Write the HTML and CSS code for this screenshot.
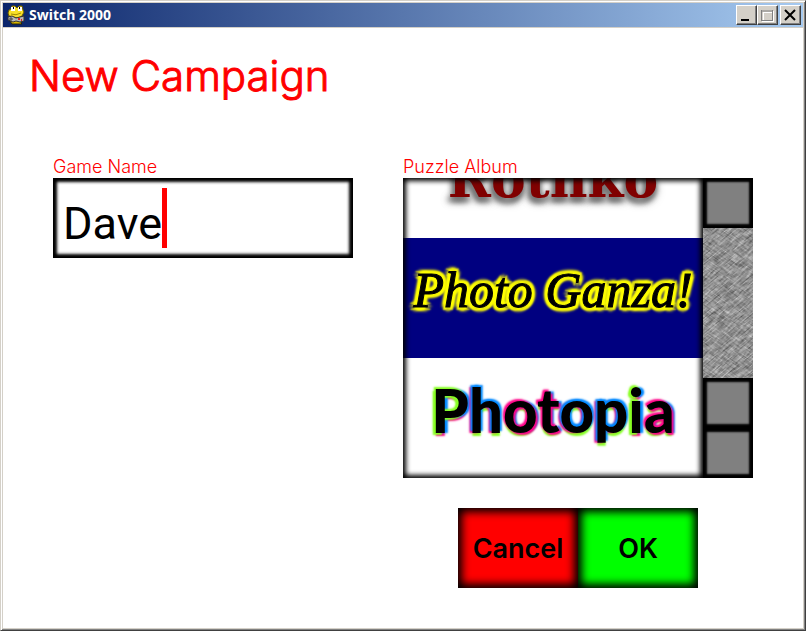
FILE: index.html
```html
<!DOCTYPE html>
<html lang="en">
<head>
    <meta charset="UTF-8">
    <meta name="viewport" content="width=device-width, initial-scale=1.0">
    <title>Switch 2000</title>
    <link rel="stylesheet" href="styles.css">
</head>
<body>
    <div class="window">
        <header class="titlebar">
            <svg class="app-icon" viewBox="0 0 18 20" aria-hidden="true">
                <path d="M4 9h10l1 5-1 4 1 1H5l-2-3z" fill="#d8b800" stroke="#2a2400"/>
                <path d="M1 8l1-3 2-1 1-3h3l2 2 2-2h3l1 4 1 2-2 4-4 2-5-1-4-1z" fill="#f8e028" stroke="#6a5a00"/>
                <rect x="4" y="2" width="4" height="4" fill="#fff"/>
                <rect x="11" y="2" width="4" height="4" fill="#fff"/>
                <path d="M6 3h1M12 3h1" stroke="#000" stroke-width="2"/>
                <path d="M4 9q5 2 10-1" fill="none" stroke="#a08800"/>
                <path d="M1 12l4-1 4 2 4-1 4-1v5l-4 1-4-1-3 1-5-2z" fill="#b8b8b8" stroke="#333"/>
                <path d="M4 12v4M2 14h4" stroke="#444"/>
                <path d="M11 14h2M14 15h1" stroke="#d22" stroke-width="2"/>
            </svg>
            <span class="title">Switch 2000</span>
            <button class="win-btn" aria-label="Minimize">
                <svg viewBox="0 0 14 14"><path d="M2 12h8" stroke="#000" stroke-width="2"/></svg>
            </button>
            <button class="win-btn" aria-label="Maximize" disabled>
                <svg viewBox="0 0 14 14">
                    <path d="M2 13.5h12M13.5 3v11M3 4.5h9M3.5 4v8" stroke="#fff"/>
                    <path d="M1 3h12M1.5 2v11M12.5 2v11M1 12.5h12" stroke="#808080"/>
                </svg>
            </button>
            <button class="win-btn close" aria-label="Close">
                <svg viewBox="0 0 14 14"><path d="M2 2l10 10M12 2L2 12" stroke="#000" stroke-width="2"/></svg>
            </button>
        </header>

        <main class="screen">
            <h1>New Campaign</h1>

            <form class="fields">
                <div class="field">
                    <label for="gameName">Game Name</label>
                    <div class="text-box">
                        <input type="text" id="gameName" value="Dave" size="4" autocomplete="off" spellcheck="false">
                        <span class="caret"></span>
                    </div>
                </div>

                <div class="field">
                    <span class="label" id="albumLabel">Puzzle Album</span>
                    <div class="album">
                        <div class="album-list" role="listbox" aria-labelledby="albumLabel">
                            <button type="button" class="item rothko" role="option">Rothko</button>
                            <button type="button" class="item ganza" role="option" aria-selected="true">Photo Ganza!</button>
                            <button type="button" class="item photopia" role="option"><span class="lime">P</span><span class="blue">h</span><span class="pink">o</span><span class="pink">t</span><span class="blue">o</span><span class="blue">p</span><span class="lime">i</span><span class="pink">a</span></button>
                        </div>
                        <div class="scrollbar">
                            <button type="button" class="scroll-btn" aria-label="Scroll up"></button>
                            <svg class="track" aria-hidden="true">
                                <filter id="scratches" x="0" y="0" width="100%" height="100%" color-interpolation-filters="sRGB">
                                    <feTurbulence type="fractalNoise" baseFrequency="0.08 0.8" numOctaves="4" seed="4"/>
                                    <feColorMatrix values="0.9 0 0 0 0.12  0.9 0 0 0 0.12  0.9 0 0 0 0.12  0 0 0 0 1"/>
                                </filter>
                                <filter id="scratchesCross" x="0" y="0" width="100%" height="100%" color-interpolation-filters="sRGB">
                                    <feTurbulence type="fractalNoise" baseFrequency="0.08 0.8" numOctaves="4" seed="9"/>
                                    <feColorMatrix values="0.9 0 0 0 0.12  0.9 0 0 0 0.12  0.9 0 0 0 0.12  0 0 0 0 1"/>
                                </filter>
                                <rect x="-150" y="-100" width="400" height="400" filter="url(#scratches)" transform="rotate(-40)"/>
                                <rect x="-150" y="-200" width="400" height="400" filter="url(#scratchesCross)" transform="rotate(35)" opacity="0.4"/>
                            </svg>
                            <button type="button" class="scroll-btn" aria-label="Page up"></button>
                            <button type="button" class="scroll-btn" aria-label="Scroll down"></button>
                        </div>
                    </div>
                </div>
            </form>

            <div class="actions">
                <button class="action cancel">Cancel</button>
                <button class="action ok">OK</button>
            </div>
        </main>
    </div>
</body>
</html>
```
FILE: styles.css
```css
* {
    box-sizing: border-box;
}
body {
    margin: 0;
    background: #d4d0c8;
    font-family: Inter, "Liberation Sans", sans-serif;
}
button {
    font-family: inherit;
    margin: 0;
    padding: 0;
    border: none;
}
.window {
    min-height: 100vh;
    display: flex;
    flex-direction: column;
    padding: 1px;
    border: 1px solid;
    border-color: #d4d0c8 #404040 #404040 #d4d0c8;
    box-shadow: inset 1px 1px #fff, inset -1px -1px #808080;
}

/* title bar */
.titlebar {
    display: flex;
    align-items: center;
    height: 25px;
    margin: 1px 1px 0;
    padding: 0 2px 0 4px;
    border-bottom: 1px solid #d4d0c8;
    background: linear-gradient(to right, #0a246a, #a6caf0);
}
.app-icon {
    width: 18px;
    height: 20px;
}
.title {
    flex: 1;
    margin-left: 4px;
    color: #fff;
    font: bold 14px/20px "Noto Sans", sans-serif;
}
.win-btn {
    width: 21px;
    height: 20px;
    padding: 2px;
    background: #d4d0c8;
    border: 1px solid;
    border-color: #fff #404040 #404040 #fff;
    box-shadow: inset -1px -1px #808080;
}
.win-btn svg {
    display: block;
    width: 14px;
    height: 14px;
}
.close {
    margin-left: 2px;
}

/* campaign screen */
.screen {
    flex: 1;
    margin: 0 1px 1px;
    background: #fff;
}
h1 {
    margin: 0;
    padding: 20px 26px 0;
    color: #f00;
    font-size: 42px;
    font-weight: 300;
    line-height: 56px;
    -webkit-text-stroke: 1px #f00;
}
.fields {
    display: grid;
    grid-template-columns: 6fr 7fr;
    gap: 50px;
    padding: 52px 50px 0;
}
.field {
    min-width: 0;
}
label, .label {
    display: block;
    color: #f00;
    font-size: 18px;
    font-weight: 300;
    line-height: 22px;
}
.text-box {
    display: flex;
    align-items: center;
    height: 80px;
    padding: 0 10px;
    background: #fff;
    box-shadow: inset 0 0 3px 4px #000;
}
.text-box input {
    field-sizing: content;
    height: 60px;
    padding: 10px 0 0;
    border: none;
    outline: none;
    background: none;
    color: #000;
    font: 45px Roboto, sans-serif;
}
.caret {
    width: 5px;
    height: 60px;
    background: #f00;
}

/* album picker */
.album {
    display: flex;
    height: 300px;
}
.album-list {
    position: relative;
    flex: 1;
    min-width: 0;
    display: flex;
    flex-direction: column;
    justify-content: flex-end;
    overflow: hidden;
}
.album-list::after {
    content: "";
    position: absolute;
    inset: 0;
    box-shadow: inset 0 0 5px 3px #000;
    pointer-events: none;
}
.item {
    flex: none;
    height: 120px;
    padding-bottom: 16px;
    background: #fff;
    color: #000;
    white-space: nowrap;
}
.rothko {
    padding-bottom: 0;
    color: #800000;
    font: bold 52px "DejaVu Serif", serif;
    text-shadow: 0 4px 5px #777, 0 4px 8px #777, -3px 4px 6px #777;
}
.ganza {
    background: #000080;
    font: italic 50px "Liberation Serif", serif;
    -webkit-text-stroke: 1px #000;
    text-shadow: 3px 3px 2px #ff0, -3px -3px 2px #ff0, 3px -3px 2px #ff0, -3px 3px 2px #ff0, 4px 0 3px #ff0, -4px 0 3px #ff0, 0 4px 3px #ff0, 0 -4px 3px #ff0;
}
.photopia {
    font: 900 60px Lato, sans-serif;
}
.lime {
    text-shadow: -2px -2px 2px #8f2, -3px 2px 2px #8f2, 3px 0 2px #08f, 0 3px 2px #f08;
}
.blue {
    text-shadow: 2px -2px 2px #08f, -2px -2px 2px #08f, -3px 0 2px #f08, 0 3px 2px #8f2;
}
.pink {
    text-shadow: 2px 2px 2px #f08, -2px -2px 2px #f08, 3px 0 2px #08f, 0 3px 2px #8f2;
}
.scrollbar {
    width: 50px;
    display: flex;
    flex-direction: column;
}
.scroll-btn {
    height: 50px;
    background: #808080;
    box-shadow: inset 0 0 2px 4px #000;
}
.track {
    flex: 1;
    width: 50px;
    min-height: 0;
    background: #888;
}

/* bottom buttons */
.actions {
    display: flex;
    justify-content: flex-end;
    padding: 30px 105px 40px;
}
.action {
    width: 120px;
    height: 80px;
    color: #000;
    font-size: 27px;
    font-weight: 600;
    box-shadow: inset 0 0 9px 4px #000;
}
.cancel {
    background: #f00;
}
.ok {
    background: #0f0;
}
```
